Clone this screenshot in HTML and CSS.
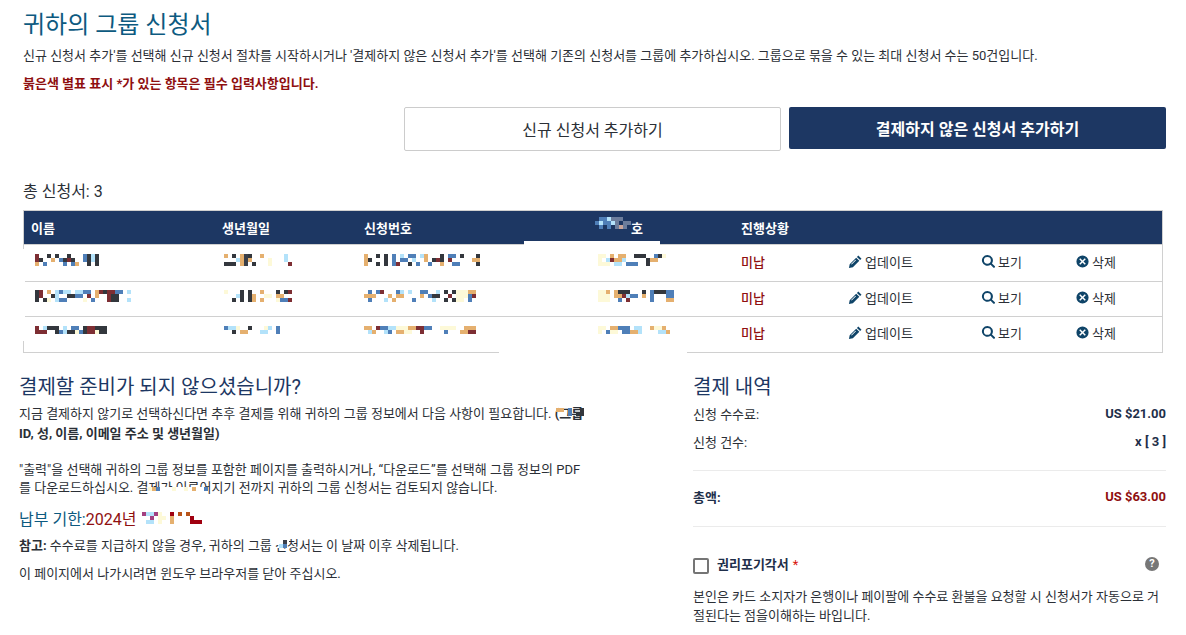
FILE: index.html
```html
<!DOCTYPE html>
<html lang="ko">
<head>
<meta charset="utf-8">
<title>귀하의 그룹 신청서</title>
<link rel="stylesheet" href="styles.css">
</head>
<body>
<svg class="defs" width="0" height="0" aria-hidden="true">
  <symbol id="i-pencil" viewBox="0 0 16 16"><path d="M11 1.600 14.400 5l-1.500 1.500L9.500 3.100zM8.700 3.900l3.400 3.400-6.900 6.900L1 15l.8-4.200zM7.900 6l-4.600 4.600.6.600L8.500 6.600z"/></symbol>
  <symbol id="i-search" viewBox="0 0 16 16"><path d="M6.800 1a5.800 5.800 0 1 0 3.400 10.500l3.100 3.100a1.100 1.100 0 0 0 1.500-1.500l-3.100-3.100A5.800 5.800 0 0 0 6.800 1zm0 2.100a3.700 3.700 0 1 1 0 7.400 3.700 3.700 0 0 1 0-7.400z"/></symbol>
  <symbol id="i-del" viewBox="0 0 16 16"><path fill-rule="evenodd" d="M8 1.500a6.500 6.500 0 1 0 0 13 6.500 6.500 0 0 0 0-13zM5.600 4.500 8 6.900l2.400-2.400 1.100 1.100L9.100 8l2.400 2.400-1.100 1.100L8 9.100l-2.400 2.400-1.100-1.100L6.900 8 4.500 5.600z"/></symbol>
</svg>

<section class="top">
  <h1 class="title">귀하의 그룹 신청서</h1>
  <p class="intro">신규 신청서 추가'를 선택해 신규 신청서 절차를 시작하시거나 '결제하지 않은 신청서 추가'를 선택해 기존의 신청서를 그룹에 추가하십시오. 그룹으로 묶을 수 있는 최대 신청서 수는 50건입니다.</p>
  <p class="required">붉은색 별표 표시 *가 있는 항목은 필수 입력사항입니다.</p>
  <div class="actions">
    <button class="btn btn-light" type="button">신규 신청서 추가하기</button>
    <button class="btn btn-dark" type="button">결제하지 않은 신청서 추가하기</button>
  </div>
  <p class="count">총 신청서: 3</p>

  <div class="table-wrap">
    <div class="table">
      <div class="row head">
        <div>이름</div><div>생년월일</div><div>신청번호</div><div class="redacted-head">신청번호</div><div>진행상황</div><div></div><div></div><div></div>
      </div>
      <div class="row">
        <div></div><div></div><div></div><div></div><div class="due">미납</div>
        <div class="act"><svg class="ico"><use href="#i-pencil"/></svg>업데이트</div>
        <div class="act"><svg class="ico"><use href="#i-search"/></svg>보기</div>
        <div class="act"><svg class="ico"><use href="#i-del"/></svg>삭제</div>
      </div>
      <div class="row">
        <div></div><div></div><div></div><div></div><div class="due">미납</div>
        <div class="act"><svg class="ico"><use href="#i-pencil"/></svg>업데이트</div>
        <div class="act"><svg class="ico"><use href="#i-search"/></svg>보기</div>
        <div class="act"><svg class="ico"><use href="#i-del"/></svg>삭제</div>
      </div>
      <div class="row">
        <div></div><div></div><div></div><div></div><div class="due">미납</div>
        <div class="act"><svg class="ico"><use href="#i-pencil"/></svg>업데이트</div>
        <div class="act"><svg class="ico"><use href="#i-search"/></svg>보기</div>
        <div class="act"><svg class="ico"><use href="#i-del"/></svg>삭제</div>
      </div>
    </div>

    <div class="wash wash-left"></div>
    <div class="wash wash-head"></div>
    <div class="wash wash-r1"></div>
    <div class="wash wash-r2"></div>
    <div class="wash wash-bottom"></div>
    <div class="cover-head"></div>

    <svg class="mz mz-h" viewBox="0 0 9 4" preserveAspectRatio="none"><path class="b" d="M1 .5h2M0 1.500h1M2 1.500h2M1 2.500h1M3 2.500h1"/><path class="s" d="M3 .5h1M1 1.500h1M4 1.500h1"/><path class="n" d="M4 .5h3M5 1.500h1M7 1.500h2M5 2.500h1M7 2.500h1"/><path class="t" d="M6 2.500h1"/></svg>

    <svg class="mz mz-a1" viewBox="0 0 17 3" preserveAspectRatio="none"><path class="r" d="M0 0.500h1M0 1.500h1M8 1.500h1"/><path class="d" d="M3 .5h1M5 .5h1M8 .5h1M1 1.500h1M7 1.500h1M9 1.500h1M13 .5h1M15 .5h1M13 1.500h1M15 1.500h1M13 2.500h1M15 2.500h1"/><path class="b" d="M12 .5h1M6 1.500h1M12 1.500h1M7 2.500h1M2 2.500h1M9 2.500h1"/><path class="t" d="M4 1.500h1M10 2.500h1M0 2.500h1"/><path class="s" d="M14 .5h1M14 1.500h1"/></svg>
    <svg class="mz mz-a2" viewBox="0 0 24 3" preserveAspectRatio="none"><path class="d" d="M0 .5h1M0 1.500h1M0 2.500h1M2 2.500h1M4 1.500h1M8 1.500h2M17 .5h1M19 1.500h2M19 2.500h2"/><path class="r" d="M1 .5h1M1 1.500h1M13 1.500h1M18 .5h2M18 1.500h1M18 2.500h1M16 .5h1"/><path class="t" d="M3 .5h1M15 .5h1M15 1.500h1"/><path class="s" d="M5 .5h1M5 1.500h1M5 2.500h1M7 .5h2M10 .5h2M23 .5h1M23 2.500h1"/><path class="b" d="M6 .5h1M10 1.500h2M12 .5h2M20 .5h2M6 2.500h2M14 2.500h1"/><path class="p" d="M3 2.500h1M12 2.500h1"/></svg>
    <svg class="mz mz-a3" viewBox="0 0 18 2" preserveAspectRatio="none"><path class="r" d="M0 0.500h1M0 1.500h3M13 .5h2M13 1.500h2"/><path class="d" d="M3 .5h3M5 1.500h1M8 1.500h2M12 .5h1M12 1.500h1M15 .5h3M16 1.500h2"/><path class="s" d="M2 .5h1M7 .5h1M7 1.500h1"/><path class="b" d="M6 1.500h1M10 .5h1M9 .5h1M11 1.500h1"/><path class="p" d="M10 1.500h1M15 1.500h1"/></svg>

    <svg class="mz mz-b1" viewBox="0 0 17 3" preserveAspectRatio="none"><path class="d" d="M0 2.500h3M2 .5h1M6 .5h1M7 2.500h1"/><path class="t" d="M0 .5h1M4 .5h1M4 1.500h1M4 2.500h1M6 1.500h1M9 .5h1"/><path class="s" d="M3 1.500h1M15 .5h1M15 1.500h1"/><path class="p" d="M11 1.500h1M11 2.500h1"/><path class="k" d="M5 .5h1M5 1.500h1M5 2.500h1"/><path class="r" d="M16 2.500h1"/></svg>
    <svg class="mz mz-b2" viewBox="0 0 17 3" preserveAspectRatio="none"><path class="p" d="M0 .5h1M10 1.500h2M13 2.500h1"/><path class="d" d="M2 2.500h1M4 .5h1M4 1.500h1M4 2.500h1M6 .5h1M6 1.500h1M6 2.500h1M13 .5h1M15 .5h1"/><path class="s" d="M3 1.500h1"/><path class="t" d="M7 1.500h1M7 2.500h1M9 .5h1M9 2.500h1M13 1.500h2"/><path class="b" d="M14 2.500h1M15 2.500h1"/><path class="r" d="M16 .5h1M16 2.500h1"/></svg>
    <svg class="mz mz-b3" viewBox="0 0 14 2" preserveAspectRatio="none"><path class="b" d="M0 .5h1M13 .5h1M13 1.500h1"/><path class="s" d="M1 .5h2M9 1.500h2M11 .5h1"/><path class="d" d="M2 1.500h1M6 .5h1"/><path class="t" d="M4 1.500h2"/><path class="p" d="M3 .5h1M10 .5h1"/></svg>

    <svg class="mz mz-c1" viewBox="0 0 29 3" preserveAspectRatio="none"><path class="t" d="M0 .5h1M0 1.500h1M0 2.500h1M15 .5h1M15 1.500h1M27 1.500h2M19 2.500h1"/><path class="d" d="M3 .5h1M5 .5h1M1 1.500h1M5 1.500h1M3 2.500h1M5 2.500h1M17 1.500h1M19 .5h1M19 1.500h1M24 .5h1M11 2.500h1M28 .5h1M28 2.500h1"/><path class="b" d="M7 .5h1M7 1.500h1M7 2.500h1M11 .5h2M9 1.500h2M13 2.500h1M16 2.500h1M21 .5h2M22 2.500h2"/><path class="r" d="M18 1.500h1M8 2.500h1M21 1.500h1"/><path class="s" d="M9 .5h1M14 .5h1M12 1.500h1"/></svg>
    <svg class="mz mz-c2" viewBox="0 0 29 3" preserveAspectRatio="none"><path class="b" d="M1 .5h1M3 .5h1M8 .5h1M14 .5h2M1 2.500h1M16 1.500h1M12 2.500h1M26 1.500h1M26 2.500h1"/><path class="t" d="M0 1.500h3M6 1.500h1M8 1.500h2M7 2.500h1M14 1.500h1M26 .5h2"/><path class="r" d="M4 .5h1M21 1.500h1M27 1.500h1"/><path class="d" d="M17 1.500h2M20 .5h1M20 2.500h1M22 .5h1M22 2.500h1"/><path class="s" d="M9 .5h1M11 .5h1M5 2.500h1M18 .5h1M17 2.500h1"/><path class="p" d="M23 .5h3M23 1.500h3M23 2.500h2"/></svg>
    <svg class="mz mz-c3" viewBox="0 0 28 2" preserveAspectRatio="none"><path class="t" d="M0 .5h2M11 .5h2M2 1.500h1M25 .5h3M24 1.500h2M8 1.500h2"/><path class="r" d="M3 .5h1M13 .5h2M14 1.500h1M26 1.500h2"/><path class="b" d="M4 .5h2M15 .5h2M6 1.500h1M20 1.500h1"/><path class="s" d="M6 .5h2M1 1.500h1M5 1.500h1"/><path class="p" d="M8 .5h3M10 1.500h2M19 .5h4"/></svg>

    <svg class="mz mz-d1" viewBox="0 0 17 3" preserveAspectRatio="none"><path class="p" d="M0 .5h2M0 1.500h1M0 2.500h3M16 .5h1"/><path class="t" d="M3 .5h1M5 .5h2M4 1.500h2M13 1.500h2"/><path class="r" d="M3 1.500h1"/><path class="d" d="M9 .5h3M12 1.500h1M12 2.500h1M15 .5h1"/><path class="b" d="M7 2.500h3M14 .5h1"/><path class="s" d="M2 1.500h1M4 2.500h2M6 1.500h1"/></svg>
    <svg class="mz mz-d2" viewBox="0 0 19 3" preserveAspectRatio="none"><path class="p" d="M0 .5h2M0 1.500h3M0 2.500h3"/><path class="t" d="M2 .5h1M4 1.500h2M11 1.500h1M17 2.500h2M4 .5h1"/><path class="d" d="M5 .5h3M11 .5h1M14 .5h3"/><path class="r" d="M6 1.500h1M7 2.500h1"/><path class="b" d="M5 2.500h1M8 1.500h2M13 .5h1M13 1.500h1M13 2.500h1M17 .5h2M17 1.500h2"/><path class="s" d="M7 1.500h1"/></svg>
    <svg class="mz mz-d3" viewBox="0 0 18 2" preserveAspectRatio="none"><path class="t" d="M3 .5h2M8 1.500h2M13 .5h1M16 .5h1M17 1.500h1"/><path class="b" d="M5 .5h3M2 1.500h1M6 1.500h2"/><path class="s" d="M9 .5h2M10 1.500h1M15 1.500h2"/><path class="p" d="M0 .5h2M0 1.500h1M3 1.500h2M14 .5h2"/></svg>
  </div>
</section>

<section class="lower">
  <div class="left">
    <h2 class="h-sub">결제할 준비가 되지 않으셨습니까?</h2>
    <p class="note tight">지금 결제하지 않기로 선택하신다면 추후 결제를 위해 귀하의 그룹 정보에서 다음 사항이 필요합니다. <b>(그룹 ID, 성, 이름, 이메일 주소 및 생년월일)</b></p>
    <p class="note gap">"출력"을 선택해 귀하의 그룹 정보를 포함한 페이지를 출력하시거나, “다운로드”를 선택해 그룹 정보의 PDF를 다운로드하십시오. 결제가 이루어지기 전까지 귀하의 그룹 신청서는 검토되지 않습니다.</p>
    <p class="deadline">납부 기한:<span class="date">2024년</span></p>
    <p class="note"><b>참고:</b> 수수료를 지급하지 않을 경우, 귀하의 그룹 신청서는 이 날짜 이후 삭제됩니다.</p>
    <p class="note">이 페이지에서 나가시려면 윈도우 브라우저를 닫아 주십시오.</p>

    <svg class="mz mz-p1" viewBox="0 0 7 2" preserveAspectRatio="none"><path class="t" d="M0 .5h2"/><path class="b" d="M3 .5h1M3 1.500h1"/><path class="d" d="M5 1.500h2M6 .5h1"/></svg>
    <div class="wash wash-p2"></div>
    <svg class="mz mz-p2" viewBox="0 0 16 1" preserveAspectRatio="none"><path class="p" d="M0 .5h2M6 .5h1M9 .5h1"/><path class="t" d="M1 .5h1M11 .5h1"/><path class="b" d="M2 .5h1M14 .5h1"/></svg>
    <svg class="mz mz-p3" viewBox="0 0 16 3" preserveAspectRatio="none"><path class="m" d="M0 .5h1M3 .5h1M2 1.500h1"/><path class="p" d="M4 .5h1M4 1.500h2M4 2.500h1"/><path class="s" d="M1 .5h2M1 2.500h2"/><path class="t" d="M7 1.500h1M7 2.500h1"/><path class="h" d="M7 .5h1M12 1.500h1M12 2.500h3"/><path class="o" d="M9 .5h1M11 .5h1"/></svg>
    <div class="wash wash-p4"></div>
    <svg class="mz mz-p4" viewBox="0 0 6 2" preserveAspectRatio="none"><path class="k" d="M2 .5h1"/><path class="s" d="M1 1.500h1"/><path class="b" d="M2 1.500h1"/></svg>
  </div>

  <aside class="right">
    <h2 class="h-sub">결제 내역</h2>
    <div class="line"><span>신청 수수료:</span><b>US $21.00</b></div>
    <div class="line"><span>신청 건수:</span><b>x [ 3 ]</b></div>
    <hr class="rule">
    <div class="line total"><b>총액:</b><b class="sum">US $63.00</b></div>
    <hr class="rule">
    <div class="waiver">
      <span class="check"></span>
      <span class="waiver-label">권리포기각서<i class="star">*</i></span>
      <span class="help">?</span>
    </div>
    <p class="waiver-text">본인은 카드 소지자가 은행이나 페이팔에 수수료 환불을 요청할 시 신청서가 자동으로 거절된다는 점을이해하는 바입니다.</p>
  </aside>
</section>
</body>
</html>
```
FILE: styles.css
```css
* { box-sizing: border-box; }
html, body { margin: 0; padding: 0; background: #fff; }
body {
  width: 1186px; height: 635px; overflow: hidden;
  font-family: Roboto, "Noto Sans CJK KR", sans-serif;
  font-size: 13px; color: #2b2f36;
}
.defs { position: absolute; }
p { margin: 0; }

.top { padding: 11px 20px 0 23px; }
.title { margin: 0; font-size: 24px; line-height: 28px; font-weight: 400; color: #0d5a80; }
.intro { margin-top: 8px; line-height: 18px; white-space: nowrap; }
.required { margin-top: 10px; line-height: 18px; font-weight: 700; color: #8f0f10; }

.actions { display: flex; justify-content: flex-end; gap: 8px; margin-top: 14px; align-items: flex-start; }
.btn { width: 377px; font: inherit; font-size: 16px; border-radius: 2px; cursor: pointer; }
.btn-light { height: 44px; background: #fff; border: 1px solid #ccc; color: #2b2f36; }
.btn-dark { height: 42px; background: #1d3763; border: 0; color: #fff; font-weight: 700; }

.count { margin-top: 31px; font-size: 16px; line-height: 20px; }

.table-wrap { position: relative; margin-top: 8px; width: 1140px; }
.table { border: 1px solid #d0d0d0; }
.row {
  display: grid;
  grid-template-columns: 191px 142px 231px 146px 114px 133px 94px 1fr;
  height: 35.500px; align-items: center;
  border-top: 1px solid #d0d0d0;
  padding-bottom: 3px;
}
.row > div { padding-left: 7px; }
.row.head { height: 33px; padding-bottom: 1px; border-top: 0; background: #1d3763; color: #fff; font-weight: 700; }
.row.head + .row { height: 36.500px; }
.redacted-head { padding-left: 8px; }
.due { color: #8f0f10; font-weight: 500; }
.act { display: flex; align-items: center; gap: 2px; padding-left: 0 !important; color: #2b2f36; }
.ico { width: 15px; height: 15px; fill: #0f4468; }

.wash { position: absolute; background: #fff; }
.wash-left { left: -1px; top: 39px; width: 3px; height: 92px; }
.wash-head { left: 501px; top: 31px; width: 136px; height: 4px; }
.wash-r1 { left: 1px; top: 69px; width: 650px; height: 2px; }
.wash-r2 { left: 1px; top: 104px; width: 655px; height: 2px; }
.wash-bottom { left: 476px; top: 136px; width: 188px; height: 8px; }
.cover-head { position: absolute; left: 572px; top: 7px; width: 36px; height: 18px; background: #1d3763; }

.mz { position: absolute; display: block; shape-rendering: crispEdges; fill: none; }
.mz path { stroke-width: 1; }
.d { stroke: #33373d; }
.k { stroke: #3a3f49; }
.n { stroke: #6c7d9c; }
.b { stroke: #4f7fb8; }
.s { stroke: #b3e2fa; }
.t { stroke: #c9a59a; }
.mz-a1 .t, .mz-a2 .t, .mz-a3 .t, .mz-b1 .t, .mz-b2 .t, .mz-b3 .t, .mz-c1 .t, .mz-c2 .t, .mz-c3 .t, .mz-d1 .t, .mz-d2 .t, .mz-d3 .t, .mz-p1 .t, .mz-p2 .t, .mz-p3 .t { stroke: #e5b06f; }
.p { stroke: #fdf9d8; }
.r { stroke: #7d2e33; }
.m { stroke: #a3407f; }
.h { stroke: #a00010; }
.o { stroke: #b8541a; }

.mz-h { left: 572px; top: 7px; width: 36px; height: 16px; }
.mz-a1 { left: 12px; top: 44px; width: 68px; height: 12px; }
.mz-a2 { left: 12px; top: 80px; width: 96px; height: 12px; }
.mz-a3 { left: 12px; top: 116px; width: 72px; height: 8px; }
.mz-b1 { left: 201px; top: 44px; width: 68px; height: 12px; }
.mz-b2 { left: 201px; top: 80px; width: 68px; height: 12px; }
.mz-b3 { left: 201px; top: 116px; width: 56px; height: 8px; }
.mz-c1 { left: 341px; top: 44px; width: 116px; height: 12px; }
.mz-c2 { left: 341px; top: 80px; width: 116px; height: 12px; }
.mz-c3 { left: 341px; top: 116px; width: 112px; height: 8px; }
.mz-d1 { left: 575px; top: 44px; width: 68px; height: 12px; }
.mz-d2 { left: 575px; top: 80px; width: 76px; height: 12px; }
.mz-d3 { left: 575px; top: 116px; width: 72px; height: 8px; }

.lower { display: flex; padding-left: 19px; margin-top: 22px; }
.left { position: relative; width: 568px; margin-right: 106px; }
.right { width: 473px; }
.h-sub { margin: 0; font-size: 20px; line-height: 24px; font-weight: 400; color: #1d3763; }

.note { line-height: 22px; margin-top: 3px; }
.note.tight { margin-top: 5px; line-height: 20px; }
.deadline { margin-top: 11px; font-size: 16px; line-height: 24px; color: #0d5a80; }
.date { color: #8f0f10; }
.note + .note { margin-top: 6px; }
.note.tight + .note.gap { margin-top: 17px; line-height: 18px; }

.mz-p1 { left: 537px; top: 33px; width: 28px; height: 8px; }
.wash-p2 { left: 129px; top: 112px; width: 56px; height: 10px; }
.mz-p2 { left: 129px; top: 112px; width: 64px; height: 4px; }
.mz-p3 { left: 123px; top: 137px; width: 64px; height: 12px; }
.wash-p4 { left: 256px; top: 164px; width: 14px; height: 6px; }
.mz-p4 { left: 256px; top: 165px; width: 24px; height: 8px; }

.line { display: flex; justify-content: space-between; align-items: center; height: 28px; }
.line:nth-of-type(1) { margin-top: 1px; }
.rule { margin: 14px 0 0; border: 0; border-top: 1px solid #ebebeb; }
.total { height: 27px; margin-top: 12px; }
.total + .rule { margin-top: 16px; }
.sum { color: #8f0f10; }
.line b { font-weight: 700; color: #1f2f4a; }
.line b.sum { color: #8f0f10; }

.waiver { display: flex; align-items: center; margin-top: 26px; height: 24px; }
.check { width: 16px; height: 16px; border: 2px solid #757575; border-radius: 2px; margin-top: 3px; }
.waiver-label { margin-left: 8px; margin-bottom: 2px; font-weight: 700; color: #1f2f4a; }
.star { color: #d9150b; font-style: normal; font-weight: 400; margin-left: 4px; }
.help {
  margin-left: auto; margin-right: 7px; margin-bottom: 2px; width: 14px; height: 14px; border-radius: 50%;
  background: #777; color: #fff; font-size: 11px; line-height: 14px; font-weight: 700; text-align: center;
}
.waiver-text { margin-top: 10px; line-height: 19px; }
```
